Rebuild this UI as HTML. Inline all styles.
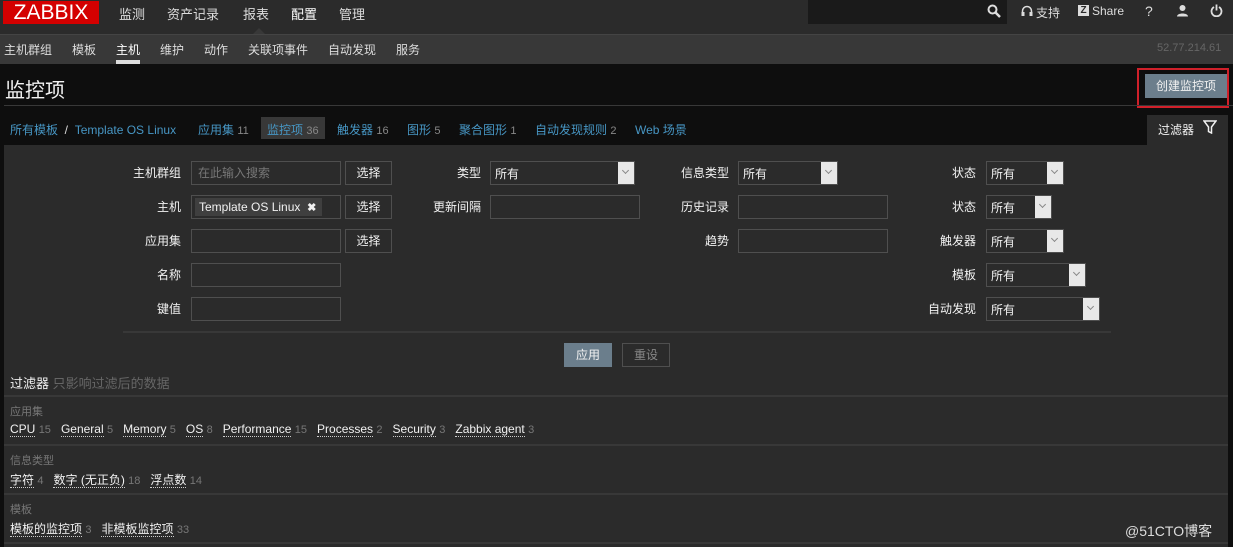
<!DOCTYPE html>
<html><head><meta charset="utf-8"><style>
*{box-sizing:border-box;margin:0;padding:0}
body{width:1233px;height:547px;overflow:hidden;background:#0e0e0e;font-family:"Liberation Sans","Noto Sans CJK SC",sans-serif;font-size:12px;color:#f2f2f2;position:relative}
.a{position:absolute;white-space:nowrap}
.top{left:0;top:0;width:1233px;height:34px;background:#2b2b2b}
.sub{left:0;top:34px;width:1233px;height:30px;background:#383838;border-top:1px solid #444}
.inp{position:absolute;height:24px;background:#2b2b2b;border:1px solid #4f4f4f;}
.btn{position:absolute;height:24px;border:1px solid #4f4f4f;background:#2b2b2b;color:#f2f2f2;text-align:center;line-height:22px;font-size:12px}
.sel{position:absolute;height:24px;background:#2b2b2b;border:1px solid #4f4f4f;color:#f2f2f2;padding-left:4px;line-height:24px}
.sel i{position:absolute;right:0;top:0;width:16px;height:22px;background:#e8e8e8;}
.sel i:after{content:"";position:absolute;left:5px;top:6px;width:4px;height:4px;border-right:1px solid #888;border-bottom:1px solid #888;transform:rotate(45deg)}
.lbl{position:absolute;text-align:right;width:120px;color:#f2f2f2;line-height:24px}
.tab{color:#4796c4;font-size:12px}
.tab b{font-weight:normal;color:#888;font-size:11px}
.u{border-bottom:1px dotted #ccc;color:#f2f2f2}
.n{color:#777;font-size:11px;margin-right:10px}
.hr{position:absolute;left:4px;width:1224px;height:2px;background:#383838}
</style></head><body>
<div class="a top"></div>
<div class="a" style="left:3px;top:1px;width:96px;height:23px;background:#d40000;color:#fff;font-size:21px;line-height:23px;text-align:center">ZABBIX</div>
<div class="a" style="left:119px;top:4px;font-size:13px;color:#ddd">监测</div>
<div class="a" style="left:167px;top:4px;font-size:13px;color:#ddd">资产记录</div>
<div class="a" style="left:243px;top:4px;font-size:13px;color:#ddd">报表</div>
<div class="a" style="left:291px;top:4px;font-size:13px;color:#fff">配置</div>
<div class="a" style="left:339px;top:4px;font-size:13px;color:#ddd">管理</div>
<div class="a" style="left:252px;top:28px;width:0;height:0;border-left:7px solid transparent;border-right:7px solid transparent;border-bottom:7px solid #383838"></div>
<div class="a" style="left:808px;top:0;width:199px;height:24px;background:#1a1a1a"></div>
<svg class="a" style="left:987px;top:4px" width="14" height="14" viewBox="0 0 14 14"><circle cx="5.5" cy="5.5" r="4" stroke="#ddd" stroke-width="2" fill="none"/><path d="M8.5 8.5L13 13" stroke="#ddd" stroke-width="2.5"/></svg>
<svg class="a" style="left:1021px;top:5px" width="12" height="13" viewBox="0 0 12 13"><path d="M1.5 8V6a4.5 4.5 0 0 1 9 0v2" stroke="#ddd" stroke-width="1.5" fill="none"/><rect x="0.5" y="7" width="3" height="4" fill="#ddd"/><rect x="8.5" y="7" width="3" height="4" fill="#ddd"/></svg>
<div class="a" style="left:1036px;top:4px;color:#ddd">支持</div>
<div class="a" style="left:1078px;top:5px;width:11px;height:11px;background:#ddd;color:#2b2b2b;font-size:10px;font-weight:bold;line-height:11px;text-align:center">Z</div>
<div class="a" style="left:1092px;top:4px;color:#ddd">Share</div>
<div class="a" style="left:1145px;top:3px;color:#ddd;font-size:14px">?</div>
<svg class="a" style="left:1176px;top:4px" width="13" height="13" viewBox="0 0 13 13"><circle cx="6.5" cy="4" r="3" fill="#ddd"/><path d="M1 12.5c0-4 11-4 11 0z" fill="#ddd"/></svg>
<svg class="a" style="left:1210px;top:4px" width="13" height="13" viewBox="0 0 13 13"><path d="M4 3a5 5 0 1 0 5 0" stroke="#ddd" stroke-width="1.8" fill="none"/><path d="M6.5 0.5v6" stroke="#ddd" stroke-width="1.8"/></svg>

<div class="a sub"></div>
<div class="a" style="left:4px;top:41px;color:#ddd">主机群组</div>
<div class="a" style="left:72px;top:41px;color:#ddd">模板</div>
<div class="a" style="left:116px;top:41px;color:#fff">主机</div>
<div class="a" style="left:116px;top:60px;width:24px;height:4px;background:#ddd"></div>
<div class="a" style="left:160px;top:41px;color:#ddd">维护</div>
<div class="a" style="left:204px;top:41px;color:#ddd">动作</div>
<div class="a" style="left:248px;top:41px;color:#ddd">关联项事件</div>
<div class="a" style="left:328px;top:41px;color:#ddd">自动发现</div>
<div class="a" style="left:396px;top:41px;color:#ddd">服务</div>
<div class="a" style="left:1157px;top:42px;color:#666;font-size:11px">52.77.214.61</div>

<div class="a" style="left:5px;top:74px;font-size:20px;color:#f2f2f2">监控项</div>
<div class="a" style="left:1137px;top:68px;width:92px;height:40px;border:2px solid #d0202a"></div>
<div class="a" style="left:1145px;top:74px;width:82px;height:24px;background:#6b7e8c;color:#f2f2f2;text-align:center;line-height:24px">创建监控项</div>
<div class="a" style="left:4px;top:105px;width:1229px;height:1px;background:#383838"></div>

<div class="a tab" style="left:10px;top:121px">所有模板 <span style="color:#ddd">&nbsp;/&nbsp;</span> Template OS Linux</div>
<div class="a tab" style="left:198px;top:121px">应用集 <b>11</b></div>
<div class="a" style="left:261px;top:117px;width:64px;height:22px;background:#383838"></div>
<div class="a tab" style="left:267px;top:121px">监控项 <b>36</b></div>
<div class="a tab" style="left:337px;top:121px">触发器 <b>16</b></div>
<div class="a tab" style="left:407px;top:121px">图形 <b>5</b></div>
<div class="a tab" style="left:459px;top:121px">聚合图形 <b>1</b></div>
<div class="a tab" style="left:535px;top:121px">自动发现规则 <b>2</b></div>
<div class="a tab" style="left:635px;top:121px">Web 场景</div>
<div class="a" style="left:1147px;top:115px;width:81px;height:30px;background:#2b2b2b"></div>
<div class="a" style="left:1158px;top:121px;color:#f2f2f2">过滤器</div>
<svg class="a" style="left:1203px;top:120px" width="14" height="14" viewBox="0 0 14 14"><path d="M1 1h12L8.5 7v6L5.5 11.5V7z" stroke="#f2f2f2" stroke-width="1.5" fill="none"/></svg>

<div class="a" style="left:4px;top:145px;width:1224px;height:402px;background:#2b2b2b"></div>

<div class="lbl" style="left:61px;top:161px">主机群组</div>
<div class="inp" style="left:191px;top:161px;width:150px;color:#777;padding-left:6px;line-height:22px">在此输入搜索</div>
<div class="btn" style="left:345px;top:161px;width:47px">选择</div>
<div class="lbl" style="left:61px;top:195px">主机</div>
<div class="inp" style="left:191px;top:195px;width:150px"><div style="position:absolute;left:3px;top:2px;height:18px;width:127px;background:#3f3f3f;padding-left:4px;line-height:18px">Template OS Linux &nbsp;<b style="font-size:11px">✖</b></div></div>
<div class="btn" style="left:345px;top:195px;width:47px">选择</div>
<div class="lbl" style="left:61px;top:229px">应用集</div>
<div class="inp" style="left:191px;top:229px;width:150px"></div>
<div class="btn" style="left:345px;top:229px;width:47px">选择</div>
<div class="lbl" style="left:61px;top:263px">名称</div>
<div class="inp" style="left:191px;top:263px;width:150px"></div>
<div class="lbl" style="left:61px;top:297px">键值</div>
<div class="inp" style="left:191px;top:297px;width:150px"></div>

<div class="lbl" style="left:361px;top:161px">类型</div>
<div class="sel" style="left:490px;top:161px;width:145px">所有<i></i></div>
<div class="lbl" style="left:361px;top:195px">更新间隔</div>
<div class="inp" style="left:490px;top:195px;width:150px"></div>

<div class="lbl" style="left:609px;top:161px">信息类型</div>
<div class="sel" style="left:738px;top:161px;width:100px">所有<i></i></div>
<div class="lbl" style="left:609px;top:195px">历史记录</div>
<div class="inp" style="left:738px;top:195px;width:150px"></div>
<div class="lbl" style="left:609px;top:229px">趋势</div>
<div class="inp" style="left:738px;top:229px;width:150px"></div>

<div class="lbl" style="left:856px;top:161px">状态</div>
<div class="sel" style="left:986px;top:161px;width:78px">所有<i></i></div>
<div class="lbl" style="left:856px;top:195px">状态</div>
<div class="sel" style="left:986px;top:195px;width:66px">所有<i></i></div>
<div class="lbl" style="left:856px;top:229px">触发器</div>
<div class="sel" style="left:986px;top:229px;width:78px">所有<i></i></div>
<div class="lbl" style="left:856px;top:263px">模板</div>
<div class="sel" style="left:986px;top:263px;width:100px">所有<i></i></div>
<div class="lbl" style="left:856px;top:297px">自动发现</div>
<div class="sel" style="left:986px;top:297px;width:114px">所有<i></i></div>

<div class="a" style="left:123px;top:331px;width:988px;height:2px;background:#383838"></div>
<div class="a" style="left:564px;top:343px;width:48px;height:24px;background:#6b7e8c;text-align:center;line-height:24px">应用</div>
<div class="btn" style="left:622px;top:343px;width:48px;color:#888">重设</div>

<div class="a" style="left:10px;top:373px;font-size:13px;color:#f2f2f2">过滤器 <span style="color:#666">只影响过滤后的数据</span></div>
<div class="hr" style="top:395px"></div>
<div class="a" style="left:10px;top:403px;font-size:11px;color:#777">应用集</div>
<div class="a" style="left:10px;top:422px"><span class="u">CPU</span> <span class="n">15</span><span class="u">General</span> <span class="n">5</span><span class="u">Memory</span> <span class="n">5</span><span class="u">OS</span> <span class="n">8</span><span class="u">Performance</span> <span class="n">15</span><span class="u">Processes</span> <span class="n">2</span><span class="u">Security</span> <span class="n">3</span><span class="u">Zabbix agent</span> <span class="n">3</span></div>
<div class="hr" style="top:444px"></div>
<div class="a" style="left:10px;top:452px;font-size:11px;color:#777">信息类型</div>
<div class="a" style="left:10px;top:471px"><span class="u">字符</span> <span class="n">4</span><span class="u">数字 (无正负)</span> <span class="n">18</span><span class="u">浮点数</span> <span class="n">14</span></div>
<div class="hr" style="top:493px"></div>
<div class="a" style="left:10px;top:501px;font-size:11px;color:#777">模板</div>
<div class="a" style="left:10px;top:520px"><span class="u">模板的监控项</span> <span class="n">3</span><span class="u">非模板监控项</span> <span class="n">33</span></div>
<div class="hr" style="top:542px"></div>
<div class="a" style="left:1125px;top:521px;font-size:14px;color:#ddd">@51CTO博客</div>
</body></html>
